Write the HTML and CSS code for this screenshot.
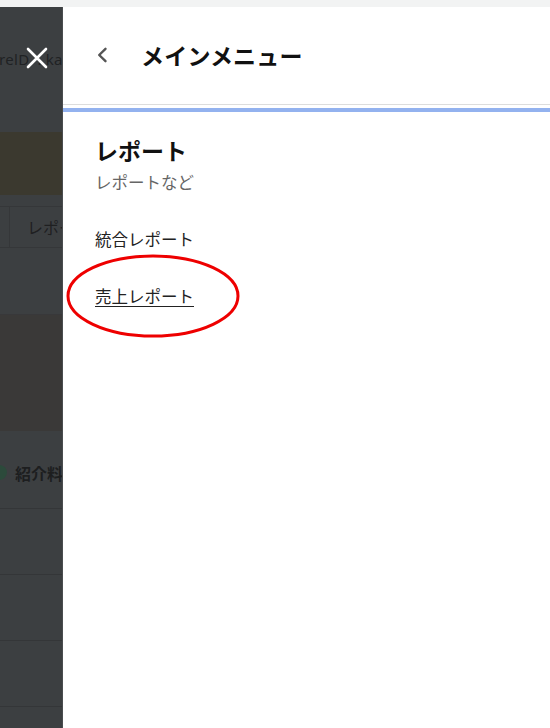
FILE: index.html
```html
<!DOCTYPE html>
<html lang="ja">
<head>
<meta charset="utf-8">
<link rel="stylesheet" href="styles.css">
</head>
<body>
<div class="topstrip"></div>
<div class="screen">
  <div class="backdrop">
    <div class="bd-header">
      <span class="bd-user">relD<span class="bd-dot">.</span>kawa</span>
      <svg class="close" width="22" height="22" viewBox="0 0 22 22"><path d="M2 2 L20 20 M20 2 L2 20" stroke="#ffffff" stroke-width="2.6" stroke-linecap="round" fill="none"/></svg>
    </div>
    <div class="bd-gap1"></div>
    <div class="bd-banner"></div>
    <div class="bd-gap2"></div>
    <div class="bd-tabs"><div class="bd-tab-first"></div><div class="bd-tab">レポート</div></div>
    <div class="bd-gap3"></div>
    <div class="bd-chart"></div>
    <div class="bd-legend"><span class="dot"></span><span class="legend-text">紹介料</span></div>
    <div class="bd-row"></div>
    <div class="bd-row"></div>
    <div class="bd-row"></div>
    <div class="bd-row last"></div>
  </div>
  <div class="panel">
    <div class="panel-header">
      <svg class="back" width="12" height="16" viewBox="0 0 12 16"><path d="M9.5 1.8 L3.2 8 L9.5 14.2" stroke="#555555" stroke-width="2.4" fill="none" stroke-linecap="round" stroke-linejoin="round"/></svg>
      <h1 class="panel-title">メインメニュー</h1>
    </div>
    <div class="accent"></div>
    <div class="section">
      <h2 class="section-title">レポート</h2>
      <p class="section-sub">レポートなど</p>
      <ul class="menu">
        <li class="menu-item">統合レポート</li>
        <li class="menu-item"><span class="active">売上レポート</span></li>
      </ul>
    </div>
    <svg class="annotation" width="180" height="88" viewBox="0 0 180 88"><ellipse cx="90" cy="44" rx="85" ry="40" stroke="#ee0000" stroke-width="3" fill="none"/></svg>
  </div>
</div>
</body>
</html>
```
FILE: styles.css
```css
* { box-sizing: border-box; }
html, body { margin: 0; padding: 0; }
body {
  width: 550px;
  height: 728px;
  overflow: hidden;
  font-family: "Noto Sans CJK JP", "Noto Sans", sans-serif;
  background: #ffffff;
}
.topstrip { height: 7px; background: #f2f3f3; }
.screen { display: flex; height: 721px; }

.backdrop {
  width: 63px;
  flex: none;
  background: #3c3f41;
  border-right: 1px solid #4a4d4f;
  overflow: hidden;
  display: flex;
  flex-direction: column;
}
.bd-header {
  height: 97px;
  position: relative;
  display: flex;
  align-items: center;
  flex: none;
}
.bd-user {
  color: #202224;
  font-family: "Noto Sans", sans-serif;
  font-size: 15px;
  white-space: nowrap;
  margin-left: -1px;
  margin-top: 6px;
  letter-spacing: 0.3px;
}
.bd-dot { margin: 0 4px 0 8px; }
.close { position: absolute; left: 26px; top: 40px; }
.bd-gap1 { height: 28px; flex: none; }
.bd-banner { height: 63px; background: #3b392f; flex: none; }
.bd-gap2 { height: 11px; flex: none; }
.bd-tabs {
  height: 42px;
  border-top: 1px solid #353739;
  border-bottom: 1px solid #353739;
  display: flex;
  flex: none;
}
.bd-tab-first { width: 10px; border-right: 1px solid #353739; flex: none; }
.bd-tab {
  padding-left: 17px;
  font-size: 16px;
  line-height: 40px;
  color: #1f2021;
  white-space: nowrap;
}
.bd-gap3 { height: 66px; flex: none; }
.bd-chart { height: 117px; background: #3a3938; border-top: 1px solid #38383a; flex: none; }
.bd-legend {
  height: 78px;
  display: flex;
  align-items: center;
  flex: none;
  border-bottom: 1px solid #343638;
  padding-top: 6px;
}
.dot {
  width: 15px; height: 15px; border-radius: 50%;
  background: #2c4a3b;
  margin-left: -8px;
  margin-right: 8px;
  flex: none;
}
.legend-text { font-size: 16px; font-weight: bold; color: #1d1e1f; white-space: nowrap; }
.bd-row { height: 66px; border-bottom: 1px solid #343638; flex: none; }

.panel {
  flex: 1;
  position: relative;
  background: #ffffff;
}
.panel-header {
  height: 98px;
  border-bottom: 1px solid #dddddd;
  display: flex;
  align-items: center;
  padding-left: 33px;
  padding-bottom: 2px;
}
.back { flex: none; }
.panel-title {
  margin: 0 0 0 33px;
  font-size: 23px;
  font-weight: bold;
  color: #111111;
  letter-spacing: 0.2px;
}
.accent { height: 4px; margin-top: 3px; background: #93b2ef; }
.section { padding: 22px 0 0 32px; }
.section-title {
  margin: 0;
  font-size: 23px;
  line-height: 32px;
  font-weight: bold;
  color: #111111;
}
.section-sub {
  margin: 4px 0 0;
  font-size: 16.5px;
  line-height: 24px;
  color: #666666;
}
.menu { list-style: none; margin: 33px 0 0; padding: 0; }
.menu-item {
  font-size: 16.5px;
  line-height: 24px;
  color: #222222;
  margin-bottom: 33px;
}
.active { text-decoration: underline; text-underline-offset: 3px; }
.annotation { position: absolute; left: 0; top: 245px; }
```
